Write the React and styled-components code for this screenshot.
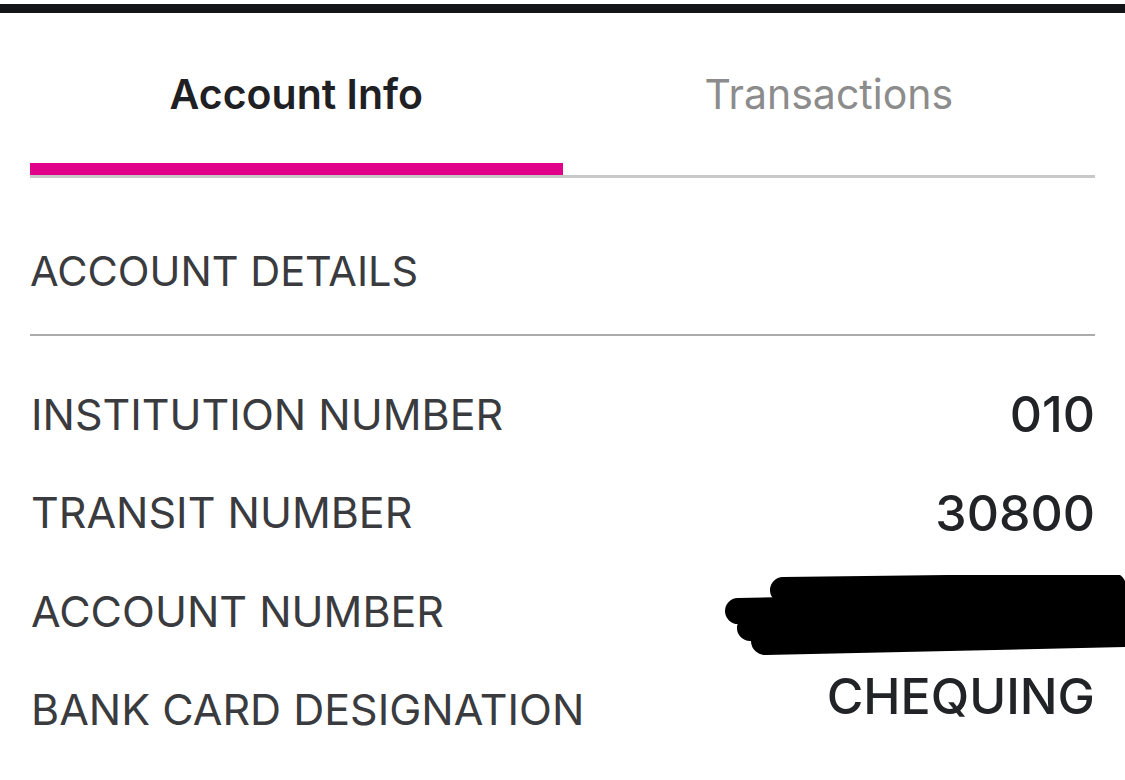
import styled, { createGlobalStyle } from 'styled-components'

const GlobalStyle = createGlobalStyle`
  body {
    margin: 0;
    background: #ffffff;
    font-family: Inter, "Noto Sans", sans-serif;
  }
`

const rows = [
  { label: 'INSTITUTION NUMBER', value: '010' },
  { label: 'TRANSIT NUMBER', value: '30800' },
  { label: 'ACCOUNT NUMBER', hidden: true },
  { label: 'BANK CARD DESIGNATION', value: 'CHEQUING', raised: true },
]

const Redaction = () => (
  <RedactSvg viewBox='0 0 400 82' width='400' height='82'>
    <g stroke='#000' strokeLinecap='round' fill='none'>
      <path d='M58 15 L388 11' strokeWidth='26' />
      <path d='M13 36 L400 28' strokeWidth='26' />
      <path d='M25 53 L400 48' strokeWidth='26' />
      <path d='M40 66 L400 58' strokeWidth='28' />
    </g>
  </RedactSvg>
)

const App = () => {
  return (
    <>
      <GlobalStyle />
      <Page>
        <TopBar />
        <TabBar>
          <Tab active>Account Info</Tab>
          <Tab>Transactions</Tab>
        </TabBar>
        <SectionHeader>ACCOUNT DETAILS</SectionHeader>
        <List>
          {rows.map(row => (
            <Row key={row.label}>
              <Label>{row.label}</Label>
              {row.hidden
                ? <Redaction />
                : <Value raised={row.raised}>{row.value}</Value>}
            </Row>
          ))}
        </List>
      </Page>
    </>
  )
}

export default App

const Page = styled.div`
  padding: 0 30px;
  overflow: hidden;
`
const TopBar = styled.div`
  margin: 4px -30px 0;
  height: 9px;
  background: #131418;
`
const TabBar = styled.div`
  display: grid;
  grid-template-columns: 1fr 1fr;
  border-bottom: 3px solid #c8c8c8;
`
const Tab = styled.div.withConfig({ shouldForwardProp: p => p !== 'active' })`
  height: 138px;
  padding-top: 12px;
  display: flex;
  align-items: center;
  justify-content: center;
  font-size: 41px;
  font-weight: ${p => (p.active ? 600 : 400)};
  color: ${p => (p.active ? '#1f2023' : '#8c8c8c')};
  border-bottom: 12px solid ${p => (p.active ? '#e0008a' : 'transparent')};
  line-height: 1;
`
const SectionHeader = styled.div`
  height: 158px;
  box-sizing: border-box;
  display: flex;
  align-items: center;
  padding-top: 32px;
  font-size: 41.5px;
  color: #3a3b3e;
  border-bottom: 2px solid #ababab;
  line-height: 1;
`
const List = styled.div`
  padding-top: 29px;
`
const Row = styled.div`
  height: 98.5px;
  display: flex;
  align-items: center;
  justify-content: space-between;
`
const Label = styled.span`
  font-size: 43px;
  color: #3a3b3e;
  line-height: 1;
  margin-left: 1px;
`
const Value = styled.span.withConfig({ shouldForwardProp: p => p !== 'raised' })`
  font-size: 50px;
  font-weight: 500;
  color: #222326;
  line-height: 1;
  margin-bottom: ${p => (p.raised ? '28px' : '0')};
`
const RedactSvg = styled.svg`
  display: block;
  margin-right: -30px;
  margin-top: 10px;
  flex-shrink: 0;
`
